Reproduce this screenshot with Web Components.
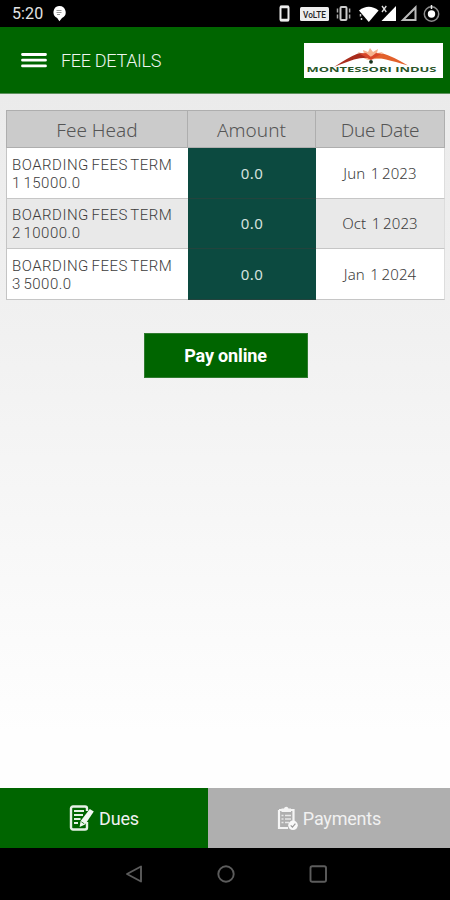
<!DOCTYPE html>
<html lang="en">
<head>
<meta charset="utf-8">
<title>Fee Details</title>
<style>
  body { margin: 0; background: #000; font-family: Roboto, sans-serif; }
</style>
</head>
<body>
<fee-app></fee-app>

<script>
function attach(el, html) {
  const template = document.createElement('template');
  template.innerHTML = html;
  el.attachShadow({ mode: 'open' }).appendChild(template.content.cloneNode(true));
}

class StatusBar extends HTMLElement {
  constructor() {
    super();
    attach(this, `
      <style>
        :host { display: flex; align-items: center; height: 27px; padding: 0 10px 0 12px; background: #000; color: #e4e4e4; }
        .time { font: 400 16px/27px Roboto, sans-serif; letter-spacing: 0.1px; width: 40px; }
        svg { display: block; flex: none; }
        .icons { margin-left: auto; }
      </style>
      <span class="time">5:20</span>
      <svg width="14" height="17" viewBox="0 0 14 17">
        <path d="M7 1a6.3 6.3 0 0 1 3 12L7.400 16.200 5.200 13A6.300 6.300 0 0 1 7 1z" fill="#fff"/>
        <path d="M4.500 5.500h5M4.500 7.500h5M5 9.500h3" stroke="#999" stroke-width="1"/>
      </svg>
      <svg class="icons" width="162" height="27" viewBox="278 0 162 27">
        <rect x="280.500" y="6.500" width="8" height="14" rx="1" fill="none" stroke="#eee" stroke-width="2"/>
        <path d="M280 7h9M280 20h9" stroke="#eee" stroke-width="2.500"/>
        <rect x="300" y="7" width="29" height="14" rx="1.500" fill="#eee"/>
        <text x="303" y="17.500" font-family="Roboto, sans-serif" font-weight="500" font-size="9" textLength="23" lengthAdjust="spacingAndGlyphs" fill="#222">VoLTE</text>
        <rect x="340.500" y="7" width="6" height="13" rx="1" fill="none" stroke="#ccc" stroke-width="2"/>
        <path d="M337.500 8.500v10M349.600 8.500v10" stroke="#aaa" stroke-width="1.500" stroke-dasharray="4 2"/>
        <path d="M359 10.500Q368.800 3 378.600 10.500L368.800 22z" fill="#fff"/>
        <path d="M360.500 14v2.500M361.500 18v2" stroke="#ccc" stroke-width="1.500"/>
        <path d="M396 6v15h-14.500z" fill="#fff"/>
        <path d="M382 6l4.300 6M386.300 6l-4.300 6" stroke="#ddd" stroke-width="1.300"/>
        <path d="M415.500 7.500v12.500h-12.500z" fill="none" stroke="#bbb" stroke-width="2"/>
        <circle cx="431.500" cy="14" r="7.200" fill="none" stroke="#8c8c8c" stroke-width="1.500"/>
        <circle cx="431.500" cy="14" r="3.700" fill="#fff"/>
        <path d="M431.500 5v4" stroke="#eee" stroke-width="1.500"/>
      </svg>
    `);
  }
}
customElements.define('status-bar', StatusBar);

class SchoolLogo extends HTMLElement {
  constructor() {
    super();
    attach(this, `
      <style>
        :host { display: block; width: 139px; height: 35px; background: #fff; }
        svg { display: block; }
      </style>
      <svg width="139" height="35" viewBox="0 0 139 35">
        <path d="M57 14l-3-5 6 2-1-4 5 2 2-4 3 4 5-3-1 4 6-1-4 3 5 3-8 1-8 1z" fill="#f6b48e"/>
        <path d="M30 24Q45 14 54 10.500Q61 9 68 15Q58 14 50 16.500Q42 19 30 24z" fill="#a92c1c"/>
        <path d="M64 16Q70 10.500 79 10.500Q88 13 104 22.500Q91 18.500 82 16.500Q74 14.500 64 16z" fill="#e2602b"/>
        <path d="M56 11l6-1 5 4 5-4 5 1-10 6z" fill="#d94729"/>
        <circle cx="67" cy="18.800" r="1.900" fill="#17311c"/>
        <text x="2.500" y="29" font-family="Open Sans, sans-serif" font-weight="700" font-size="7" textLength="130" lengthAdjust="spacingAndGlyphs" fill="#285528">MONTESSORI INDUS</text>
      </svg>
    `);
  }
}
customElements.define('school-logo', SchoolLogo);

class AppHeader extends HTMLElement {
  constructor() {
    super();
    attach(this, `
      <style>
        :host { display: flex; align-items: center; box-sizing: border-box; height: 67px; padding: 0 7px 0 21px; background: #006500; border-bottom: 1px solid #5d915d; }
        svg { display: block; }
        h1 { margin: 2px 0 0 14px; font: 300 18px/24px Roboto, sans-serif; letter-spacing: -0.3px; color: #f0f6f0; }
        school-logo { margin-left: auto; }
      </style>
      <svg width="26" height="16" viewBox="0 0 26 16"><path d="M1.500 2.500h23M1.500 8.200h23M1.500 13.900h23" stroke="#fff" stroke-width="2.800" stroke-linecap="round"/></svg>
      <h1><slot></slot></h1>
      <school-logo></school-logo>
    `);
  }
}
customElements.define('app-header', AppHeader);

class FeeRow extends HTMLElement {
  constructor() {
    super();
    attach(this, `
      <style>
        :host { display: grid; grid-template-columns: 182px 128px 129px; height: 50.5px; background: #fff; color: #3c3c3c; font: 300 15px/18px "Noto Sans", sans-serif; }
        :host([shaded]) { background: #e9e9e9; }
        :host([head]) { height: 38px; background: #cbcbcb; color: #555; font-size: 19px; line-height: 24px; }
        div { display: flex; align-items: center; justify-content: center; box-sizing: border-box; border-bottom: 1px solid #c6c6c6; white-space: pre; }
        .name { border-left: 1px solid #c4c4c4; justify-content: flex-start; padding: 2px 0 0 5px; white-space: normal; font-family: Roboto, sans-serif; letter-spacing: 0.5px; word-spacing: -1.5px; }
        .amount { background: #0c4a40; color: #d5e2df; border-color: #23433d; font-weight: 400; letter-spacing: 0.4px; }
        .due { border-right: 1px solid #ddd; word-spacing: -1.3px; letter-spacing: 0.1px; }
        :host([head]) div { justify-content: center; padding: 2px 0 0; background: none; color: inherit; border: solid #aeaeae; border-width: 1px 1px 1px 0; font: inherit; letter-spacing: 0; word-spacing: 0; }
        :host([head]) .name { border-left-width: 1px; }
        :host([head]) .due { letter-spacing: -0.3px; }
      </style>
      <div class="name"><slot name="name"></slot></div>
      <div class="amount"><slot name="amount"></slot></div>
      <div class="due"><slot name="due"></slot></div>
    `);
  }
}
customElements.define('fee-row', FeeRow);

class PayButton extends HTMLElement {
  constructor() {
    super();
    attach(this, `
      <style>
        :host { display: block; }
        button { display: block; width: 164px; height: 45px; padding: 2px 0 0; border: 1px solid #2f7b2f; background: #006500; color: #fff; font: 700 18px/24px Roboto, sans-serif; letter-spacing: -0.15px; }
      </style>
      <button type="button"><slot></slot></button>
    `);
  }
}
customElements.define('pay-button', PayButton);

class TabItem extends HTMLElement {
  constructor() {
    super();
    attach(this, `
      <style>
        :host { display: flex; align-items: center; justify-content: center; gap: 5px; background: #afafaf; color: #f1f1f1; font: 400 18px/24px Roboto, sans-serif; letter-spacing: -0.2px; }
        :host([active]) { background: #006500; }
        span { padding-top: 1px; }
      </style>
      <slot name="icon"></slot>
      <span><slot></slot></span>
    `);
  }
}
customElements.define('tab-item', TabItem);

class NavBar extends HTMLElement {
  constructor() {
    super();
    attach(this, `
      <style>
        :host { display: flex; align-items: center; justify-content: center; gap: 72px; height: 52px; padding-left: 1px; background: #000; }
        svg { display: block; }
      </style>
      <svg width="20" height="20" viewBox="0 0 20 20"><path d="M17 2.500v15L3 10z" fill="none" stroke="#5c5c5c" stroke-width="1.900" stroke-linejoin="round"/></svg>
      <svg width="20" height="20" viewBox="0 0 20 20"><circle cx="10" cy="10" r="7.700" fill="none" stroke="#5c5c5c" stroke-width="1.900"/></svg>
      <svg width="20" height="20" viewBox="0 0 20 20"><rect x="2.500" y="2.300" width="15.500" height="15.500" rx="1.800" fill="none" stroke="#5c5c5c" stroke-width="1.900"/></svg>
    `);
  }
}
customElements.define('nav-bar', NavBar);

class FeeApp extends HTMLElement {
  constructor() {
    super();
    attach(this, `
      <style>
        :host { display: flex; flex-direction: column; width: 450px; height: 900px; overflow: hidden; }
        main { flex: 1; display: flex; flex-direction: column; align-items: center; padding-top: 16px; background: linear-gradient(#ebebeb, #f1f1f1 35%, #fefefe 92%); }
        .table { width: 439px; margin-left: 1px; }
        pay-button { margin: 33px 0 0 1px; }
        .tabs { display: grid; grid-template-columns: 208px 1fr; height: 60px; }
        svg { display: block; }
      </style>
      <status-bar></status-bar>
      <app-header>FEE DETAILS</app-header>
      <main>
        <div class="table">
          <fee-row head><span slot="name">Fee Head</span><span slot="amount">Amount</span><span slot="due">Due Date</span></fee-row>
          <fee-row><span slot="name">BOARDING FEES TERM<br>1 15000.0</span><span slot="amount">0.0</span><span slot="due">Jun  1 2023</span></fee-row>
          <fee-row shaded><span slot="name">BOARDING FEES TERM<br>2 10000.0</span><span slot="amount">0.0</span><span slot="due">Oct  1 2023</span></fee-row>
          <fee-row><span slot="name">BOARDING FEES TERM<br>3 5000.0</span><span slot="amount">0.0</span><span slot="due">Jan  1 2024</span></fee-row>
        </div>
        <pay-button>Pay online</pay-button>
      </main>
      <div class="tabs">
        <tab-item active>
          <svg slot="icon" width="25" height="26" viewBox="0 0 25 26">
            <path d="M18 17v5.500a2 2 0 0 1-2 2H4a2 2 0 0 1-2-2v-19a2 2 0 0 1 2-2h12a2 2 0 0 1 2 2V6" fill="none" stroke="#e6f1e6" stroke-width="2.400"/>
            <path d="M5 6h10M5 10h9M5 14h6.500M5 18h4" stroke="#e6f1e6" stroke-width="2"/>
            <path d="M20.800 4l4 2.500-8.700 13-5.500 2.500 1-6z" fill="#f2f8f2"/>
            <path d="M12.300 16.800l3 2" stroke="#006500" stroke-width=".8"/>
          </svg>
          Dues
        </tab-item>
        <tab-item>
          <svg slot="icon" width="21" height="25" viewBox="0 0 21 25">
            <path d="M2 4h14.500v11M11 22H2V4" fill="none" stroke="#f5f5f5" stroke-width="2.200"/>
            <path d="M4.500 2.500h2.500a2.300 2.300 0 0 1 4.500 0H14V6H4.500z" fill="#f5f5f5"/>
            <path d="M4.500 9.500h2M8 9.500h6M4.500 13h2M8 13h6M4.500 16.500h2M8 16.500h4" stroke="#e8e8e8" stroke-width="1.300"/>
            <circle cx="16" cy="19.300" r="4.800" fill="#f8f8f8"/>
            <path d="M13.700 19.400l1.700 1.700 3-3.500" fill="none" stroke="#999" stroke-width="1.200"/>
          </svg>
          Payments
        </tab-item>
      </div>
      <nav-bar></nav-bar>
    `);
  }
}
customElements.define('fee-app', FeeApp);
</script>
</body>
</html>
